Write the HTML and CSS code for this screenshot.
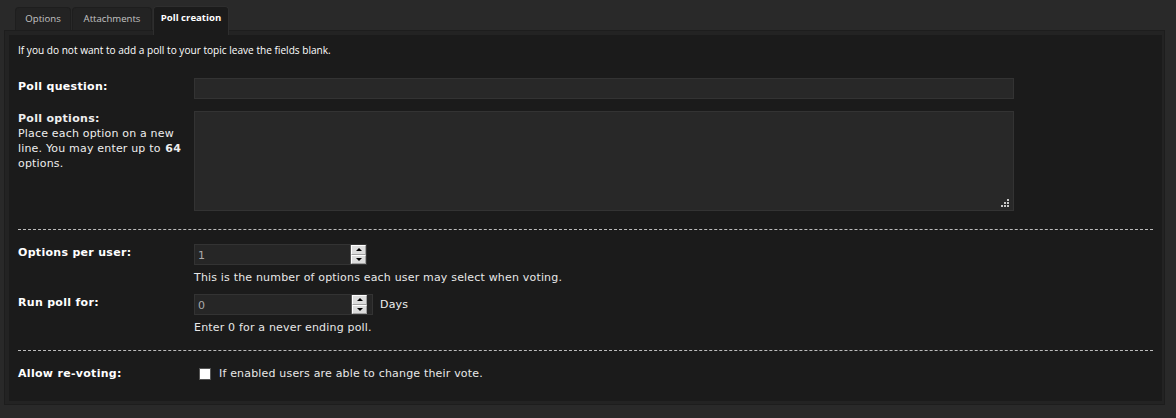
FILE: index.html
```html
<!DOCTYPE html>
<html>
<head>
<meta charset="utf-8">
<link rel="stylesheet" href="styles.css">
</head>
<body>
<div class="wrap">
  <ul class="tabs">
    <li class="tab">Options</li>
    <li class="tab">Attachments</li>
    <li class="tab active">Poll creation</li>
  </ul>
  <div class="panel">
    <div class="inner">
      <p class="intro">If you do not want to add a poll to your topic leave the fields blank.</p>

      <div class="row row-q">
        <div class="label"><b>Poll question:</b></div>
        <div class="field"><div class="text-input wide"></div></div>
      </div>

      <div class="row row-o">
        <div class="label"><b>Poll options:</b><br>Place each option on a new line. You may enter up to <b class="num-b">64</b> options.</div>
        <div class="field">
          <div class="textarea">
            <svg class="grip" width="9" height="9" viewBox="0 0 9 9"><g fill="#c8c8c8"><rect x="6" y="0" width="2" height="2"/><rect x="3" y="3" width="2" height="2"/><rect x="6" y="3" width="2" height="2"/><rect x="0" y="6" width="2" height="2"/><rect x="3" y="6" width="2" height="2"/><rect x="6" y="6" width="2" height="2"/></g></svg>
          </div>
        </div>
      </div>

      <hr class="dash dash1">

      <div class="row row-u">
        <div class="label"><b>Options per user:</b></div>
        <div class="field">
          <div class="num num1"><span class="val">1</span><span class="spin"><span class="up"></span><span class="down"></span></span></div>
          <div class="explain">This is the number of options each user may select when voting.</div>
        </div>
      </div>

      <div class="row row-r">
        <div class="label"><b>Run poll for:</b></div>
        <div class="field">
          <div class="inline"><div class="num num2"><span class="val">0</span><span class="spin"><span class="up"></span><span class="down"></span></span></div><span class="days">Days</span></div>
          <div class="explain">Enter 0 for a never ending poll.</div>
        </div>
      </div>

      <hr class="dash dash2">

      <div class="row row-v">
        <div class="label"><b>Allow re-voting:</b></div>
        <div class="field check"><span class="box"></span><span>If enabled users are able to change their vote.</span></div>
      </div>
    </div>
  </div>
</div>
</body>
</html>
```

FILE: styles.css
```css
html, body {
  margin: 0;
  padding: 0;
}
body {
  background: #292929;
  width: 1176px;
  height: 418px;
  overflow: hidden;
  font-family: "DejaVu Sans", Verdana, sans-serif;
  font-size: 11px;
  letter-spacing: 0.18px;
  color: #e8e8e8;
}
b { letter-spacing: 0.3px; }
.num-b { margin-left: 1px; }
.wrap {
  padding: 6px 11px 0 4px;
}
.tabs {
  list-style: none;
  margin: 0 0 0 11px;
  padding: 0;
  display: flex;
  align-items: flex-end;
  gap: 1px;
  height: 24px;
}
.tab {
  font-family: "Open Sans", "Noto Sans", sans-serif;
  font-size: 9.6px;
  letter-spacing: 0;
  color: #c4c4c4;
  background: #232323;
  border: 1px solid #1e1e1e;
  border-bottom: none;
  border-radius: 4px 4px 0 0;
  line-height: 22px;
  padding: 0;
  text-align: center;
  box-sizing: border-box;
  height: 23px;
}
.tab:nth-child(1) { width: 56px; }
.tab:nth-child(2) { width: 80px; }
.tab.active {
  width: 76px;
  background: #1b1b1b;
  color: #fff;
  font-weight: bold;
  height: 29px;
  line-height: 22px;
  margin-bottom: -5px;
  position: relative;
  z-index: 1;
  border-color: #2e2e2e;
}
.panel {
  border: 1px solid #1d1d1d;
  background: #232323;
  padding: 4px 2px 3px 4px;
  height: 375px;
  box-sizing: border-box;
}
.inner {
  background: #1b1b1b;
  height: 366px;
  padding: 0 9px;
  box-sizing: border-box;
  overflow: hidden;
}
.intro {
  margin: 0;
  padding-top: 7px;
  font-family: "Open Sans", "Noto Sans", sans-serif;
  font-size: 10.1px;
  letter-spacing: 0;
  line-height: 16px;
  color: #fff;
}
.row {
  display: grid;
  grid-template-columns: 176px 820px;
}
.label {
  line-height: 15px;
  color: #fff;
}
.row-q { margin-top: 20px; }
.row-q .label { padding-top: 1px; }
.text-input {
  height: 21px;
  background: #282828;
  border: 1px solid #333;
  box-sizing: border-box;
}
.row-o { margin-top: 12px; }
.row-o .label { color: #eee; }
.textarea {
  height: 100px;
  background: #282828;
  border: 1px solid #333;
  box-sizing: border-box;
  display: flex;
  justify-content: flex-end;
  align-items: flex-end;
  padding: 0 3px 2px 0;
}
.grip { display: block; }
.dash {
  border: none;
  border-top: 1px dashed #bdbdbd;
  margin: 0;
  height: 0;
}
.dash1 { margin-top: 18px; }
.row-u { margin-top: 14px; }
.row-u .label, .row-r .label { padding-top: 1px; }
.num {
  height: 21px;
  background: #262626;
  border: 1px solid #333;
  box-sizing: border-box;
  display: flex;
  align-items: center;
  justify-content: space-between;
  color: #aaa;
  padding: 0 0 0 3px;
}
.num1 { width: 173px; }
.num2 { width: 179px; padding-right: 5px; }
.val { padding-top: 2px; }
.spin {
  width: 16px;
  height: 19px;
  display: flex;
  flex-direction: column;
  background: #f0f0f0;
  border-left: 1px solid #555;
  box-sizing: border-box;
}
.spin span {
  flex: 1;
  position: relative;
  background: #dcdcdc;
  border: 1px solid #fff;
  border-right-color: #a0a0a0;
  border-bottom-color: #a0a0a0;
}
.spin .up::after, .spin .down::after {
  content: "";
  position: absolute;
  left: 50%;
  top: 50%;
  margin-left: -3px;
  border-left: 3px solid transparent;
  border-right: 3px solid transparent;
}
.spin .up::after {
  margin-top: -2px;
  border-bottom: 3px solid #000;
}
.spin .down::after {
  margin-top: -1px;
  border-top: 3px solid #000;
}
.explain {
  margin-top: 5px;
  line-height: 15px;
  color: #e8e8e8;
}
.row-r { margin-top: 9px; }
.inline { display: flex; align-items: center; gap: 7px; }
.days { color: #eee; }
.dash2 { margin-top: 15px; }
.row-v { margin-top: 15px; }
.row-v .label { padding-top: 0; }
.check {
  display: flex;
  align-items: center;
  gap: 8px;
  padding-left: 5px;
  line-height: 15px;
}
.box {
  width: 12px;
  height: 12px;
  background: #fff;
  border: 1px solid #555;
  box-sizing: border-box;
}
```
